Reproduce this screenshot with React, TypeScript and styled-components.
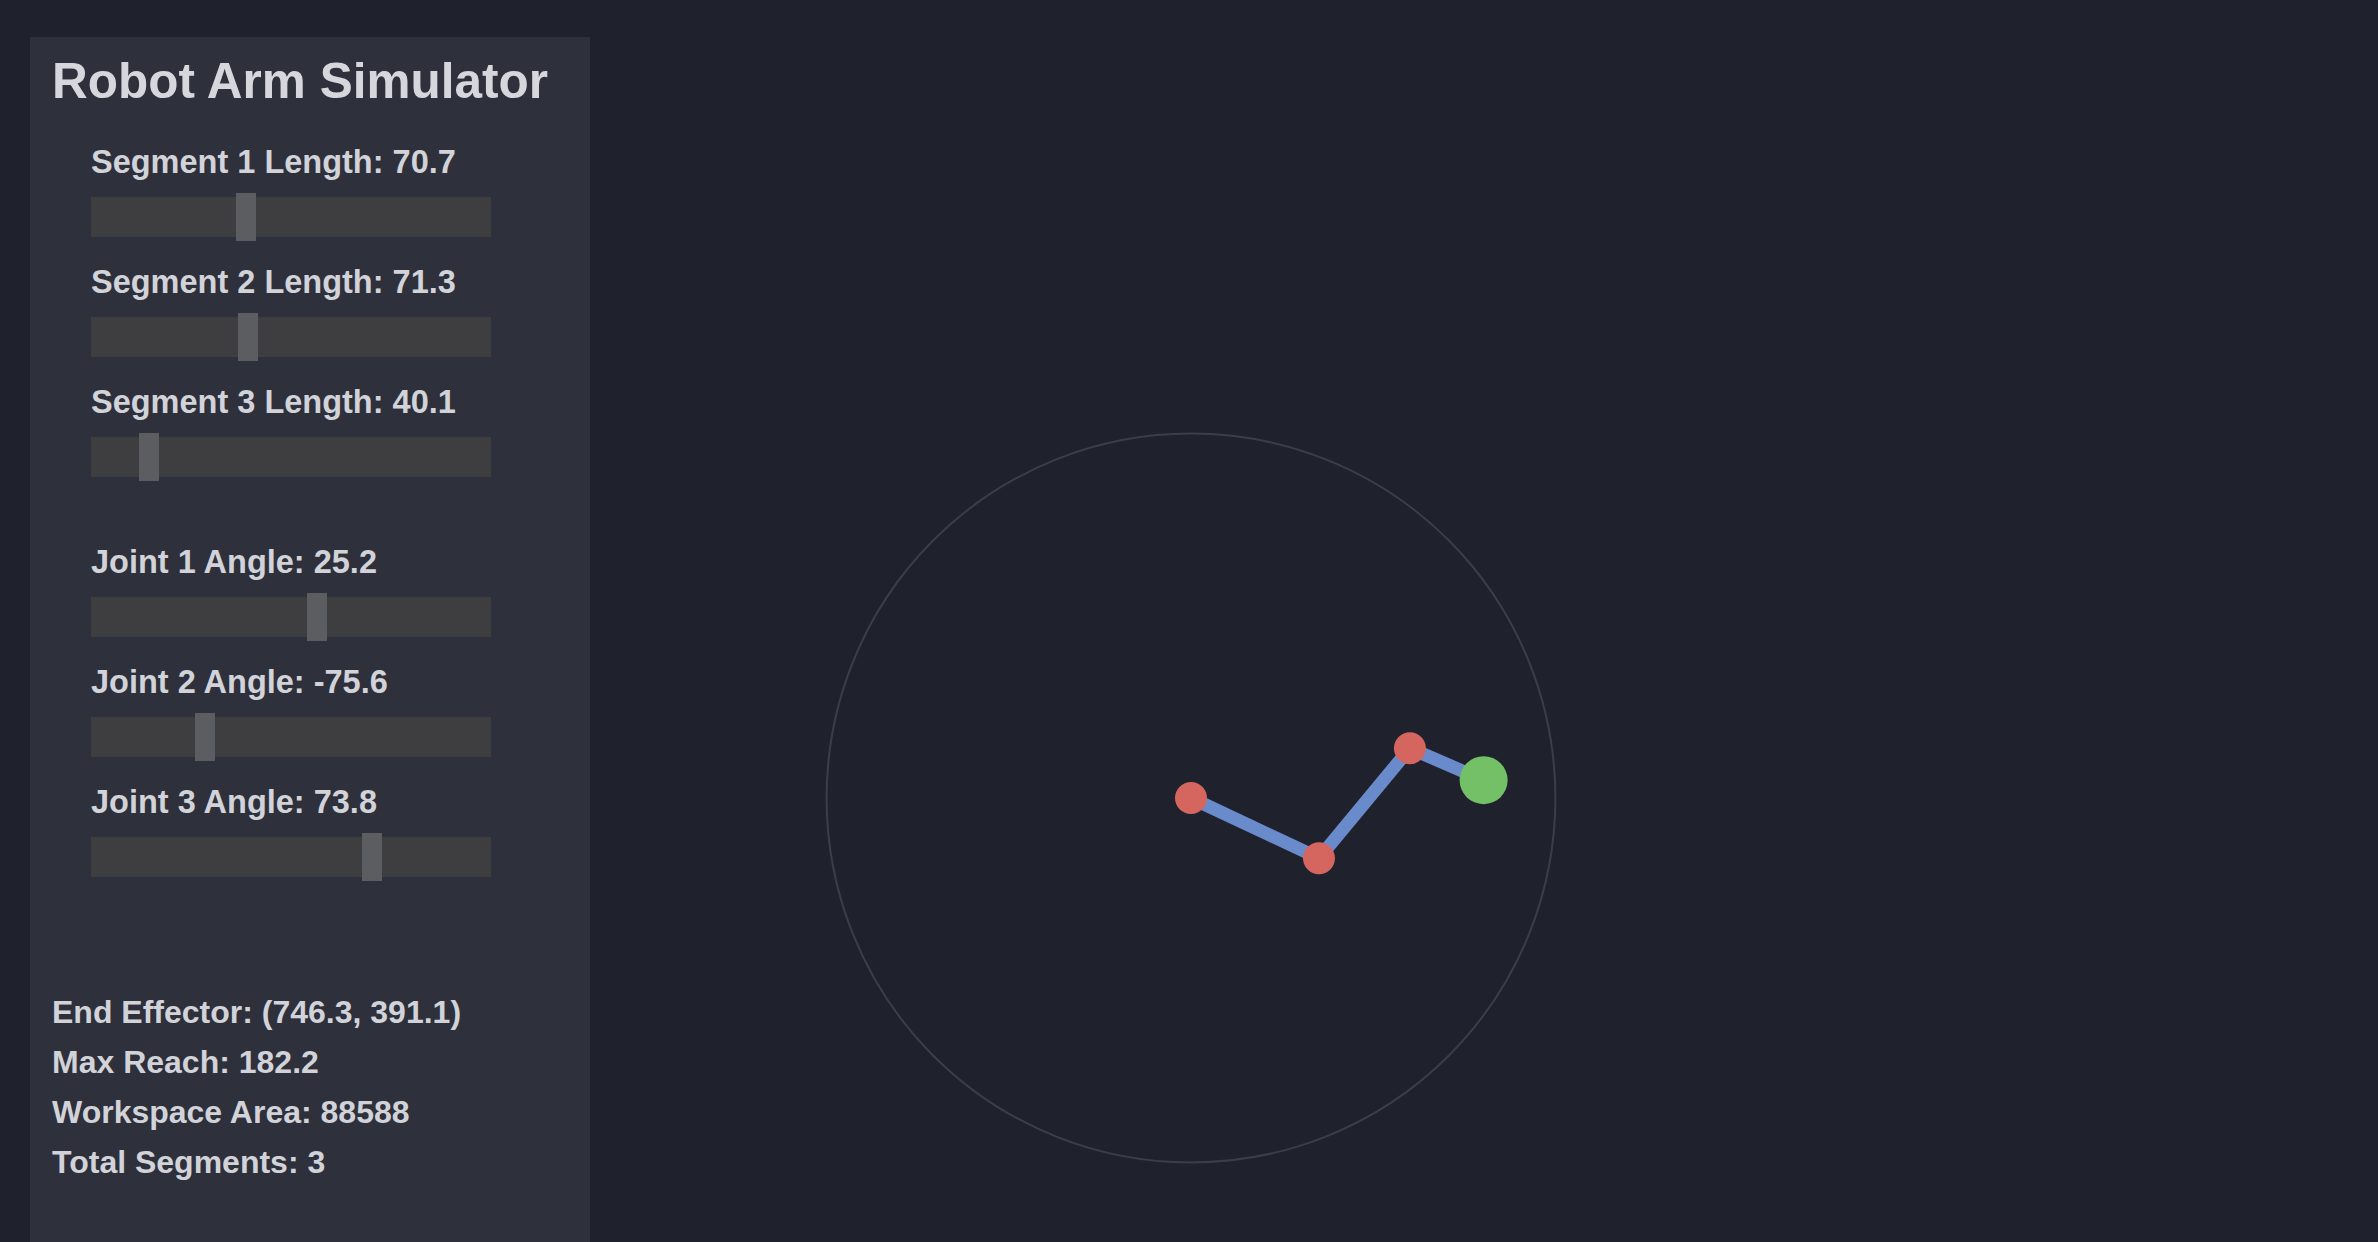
import { useState } from "react";
import styled, { createGlobalStyle } from "styled-components";

const GlobalStyle = createGlobalStyle`
    html, body {
        margin: 0;
        padding: 0;
        height: 100%;
        background: #1f222d;
        overflow: hidden;
    }
    #root {
        height: 100%;
    }
`;

const Page = styled.div`
    display: flex;
    height: 100vh;
    font-family: "Liberation Sans", Arial, sans-serif;
    color: #d2d3d9;
`;

const Panel = styled.aside`
    flex: 0 0 560px;
    box-sizing: border-box;
    margin: 37px 0 0 30px;
    padding: 16px 22px 0;
    background: #2e303c;
`;

const Title = styled.h1`
    margin: 0 0 33px;
    font-size: 49.5px;
    line-height: 56px;
    font-weight: 700;
    color: #d6d7dc;
    white-space: nowrap;
`;

const ControlGroup = styled.div<{ $gap?: number }>`
    display: flex;
    flex-direction: column;
    margin: ${(p) => p.$gap ?? 0}px 0 0 39px;
`;

const SliderRow = styled.label`
    display: flex;
    flex-direction: column;
    padding-bottom: 21px;
`;

const SliderLabel = styled.span`
    font-size: 32.5px;
    line-height: 40px;
    font-weight: 700;
    white-space: nowrap;
`;

const Range = styled.input.attrs({ type: "range" })`
    -webkit-appearance: none;
    appearance: none;
    display: block;
    width: 400px;
    height: 48px;
    margin: 11px 0 0;
    padding: 0;
    background: transparent;
    outline: none;

    &::-webkit-slider-runnable-track {
        height: 40px;
        background: #3e3e41;
        border: none;
    }
    &::-webkit-slider-thumb {
        -webkit-appearance: none;
        width: 20px;
        height: 48px;
        margin-top: -4px;
        background: #5c5d61;
        border: none;
        border-radius: 0;
    }
`;

const Stats = styled.div`
    display: flex;
    flex-direction: column;
    margin-top: 85px;
`;

const StatLine = styled.div`
    font-size: 32px;
    line-height: 50px;
    font-weight: 700;
    white-space: nowrap;
`;

const Stage = styled.main`
    flex: 1;
    height: 100%;
`;

const ArmCanvas = styled.svg`
    display: block;
    width: 100%;
    height: 100%;
`;

const BASE = { x: 600, y: 400 };
const rad = (d: number) => (d * Math.PI) / 180;

export default function App() {
    const [lengths, setLengths] = useState([70.717, 71.342, 40.148]);
    const [angles, setAngles] = useState([25.2, -75.6, 73.8]);

    const points = [BASE];
    let acc = 0;
    lengths.forEach((len, i) => {
        acc += angles[i];
        const prev = points[points.length - 1];
        points.push({ x: prev.x + len * Math.cos(rad(acc)), y: prev.y + len * Math.sin(rad(acc)) });
    });
    const end = points[points.length - 1];
    const maxReach = lengths.reduce((a, b) => a + b, 0);
    const area = Math.PI * (maxReach * maxReach - lengths[0] * lengths[0]);

    const setLength = (i: number, v: number) => setLengths((l) => l.map((x, j) => (j === i ? v : x)));
    const setAngle = (i: number, v: number) => setAngles((a) => a.map((x, j) => (j === i ? v : x)));

    return (
        <>
            <GlobalStyle />
            <Page>
                <Panel>
                    <Title>Robot Arm Simulator</Title>
                    <ControlGroup>
                        {lengths.map((len, i) => (
                            <SliderRow key={"len" + i}>
                                <SliderLabel>Segment {i + 1} Length: {len.toFixed(1)}</SliderLabel>
                                <Range min={25} max={145} step={0.1} value={len} onChange={(e) => setLength(i, parseFloat(e.target.value))} />
                            </SliderRow>
                        ))}
                    </ControlGroup>
                    <ControlGroup $gap={40}>
                        {angles.map((ang, i) => (
                            <SliderRow key={"ang" + i}>
                                <SliderLabel>Joint {i + 1} Angle: {ang.toFixed(1)}</SliderLabel>
                                <Range min={-169} max={172} step={0.1} value={ang} onChange={(e) => setAngle(i, parseFloat(e.target.value))} />
                            </SliderRow>
                        ))}
                    </ControlGroup>
                    <Stats>
                        <StatLine>End Effector: ({end.x.toFixed(1)}, {end.y.toFixed(1)})</StatLine>
                        <StatLine>Max Reach: {maxReach.toFixed(1)}</StatLine>
                        <StatLine>Workspace Area: {Math.round(area)}</StatLine>
                        <StatLine>Total Segments: {lengths.length}</StatLine>
                    </Stats>
                </Panel>
                <Stage>
                    <ArmCanvas>
                        <g transform={`translate(601 798) scale(2) translate(${-BASE.x} ${-BASE.y})`}>
                            <circle cx={BASE.x} cy={BASE.y} r={maxReach} fill="none" stroke="#3b3e48" strokeWidth={1} />
                            {points.slice(1).map((p, i) => (
                                <line key={"seg" + i} x1={points[i].x} y1={points[i].y} x2={p.x} y2={p.y} stroke="#6a8bcb" strokeWidth={6.5} />
                            ))}
                            {points.slice(0, -1).map((p, i) => (
                                <circle key={"joint" + i} cx={p.x} cy={p.y} r={8} fill="#d5665f" />
                            ))}
                            <circle cx={end.x} cy={end.y} r={12} fill="#74c067" />
                        </g>
                    </ArmCanvas>
                </Stage>
            </Page>
        </>
    );
}
